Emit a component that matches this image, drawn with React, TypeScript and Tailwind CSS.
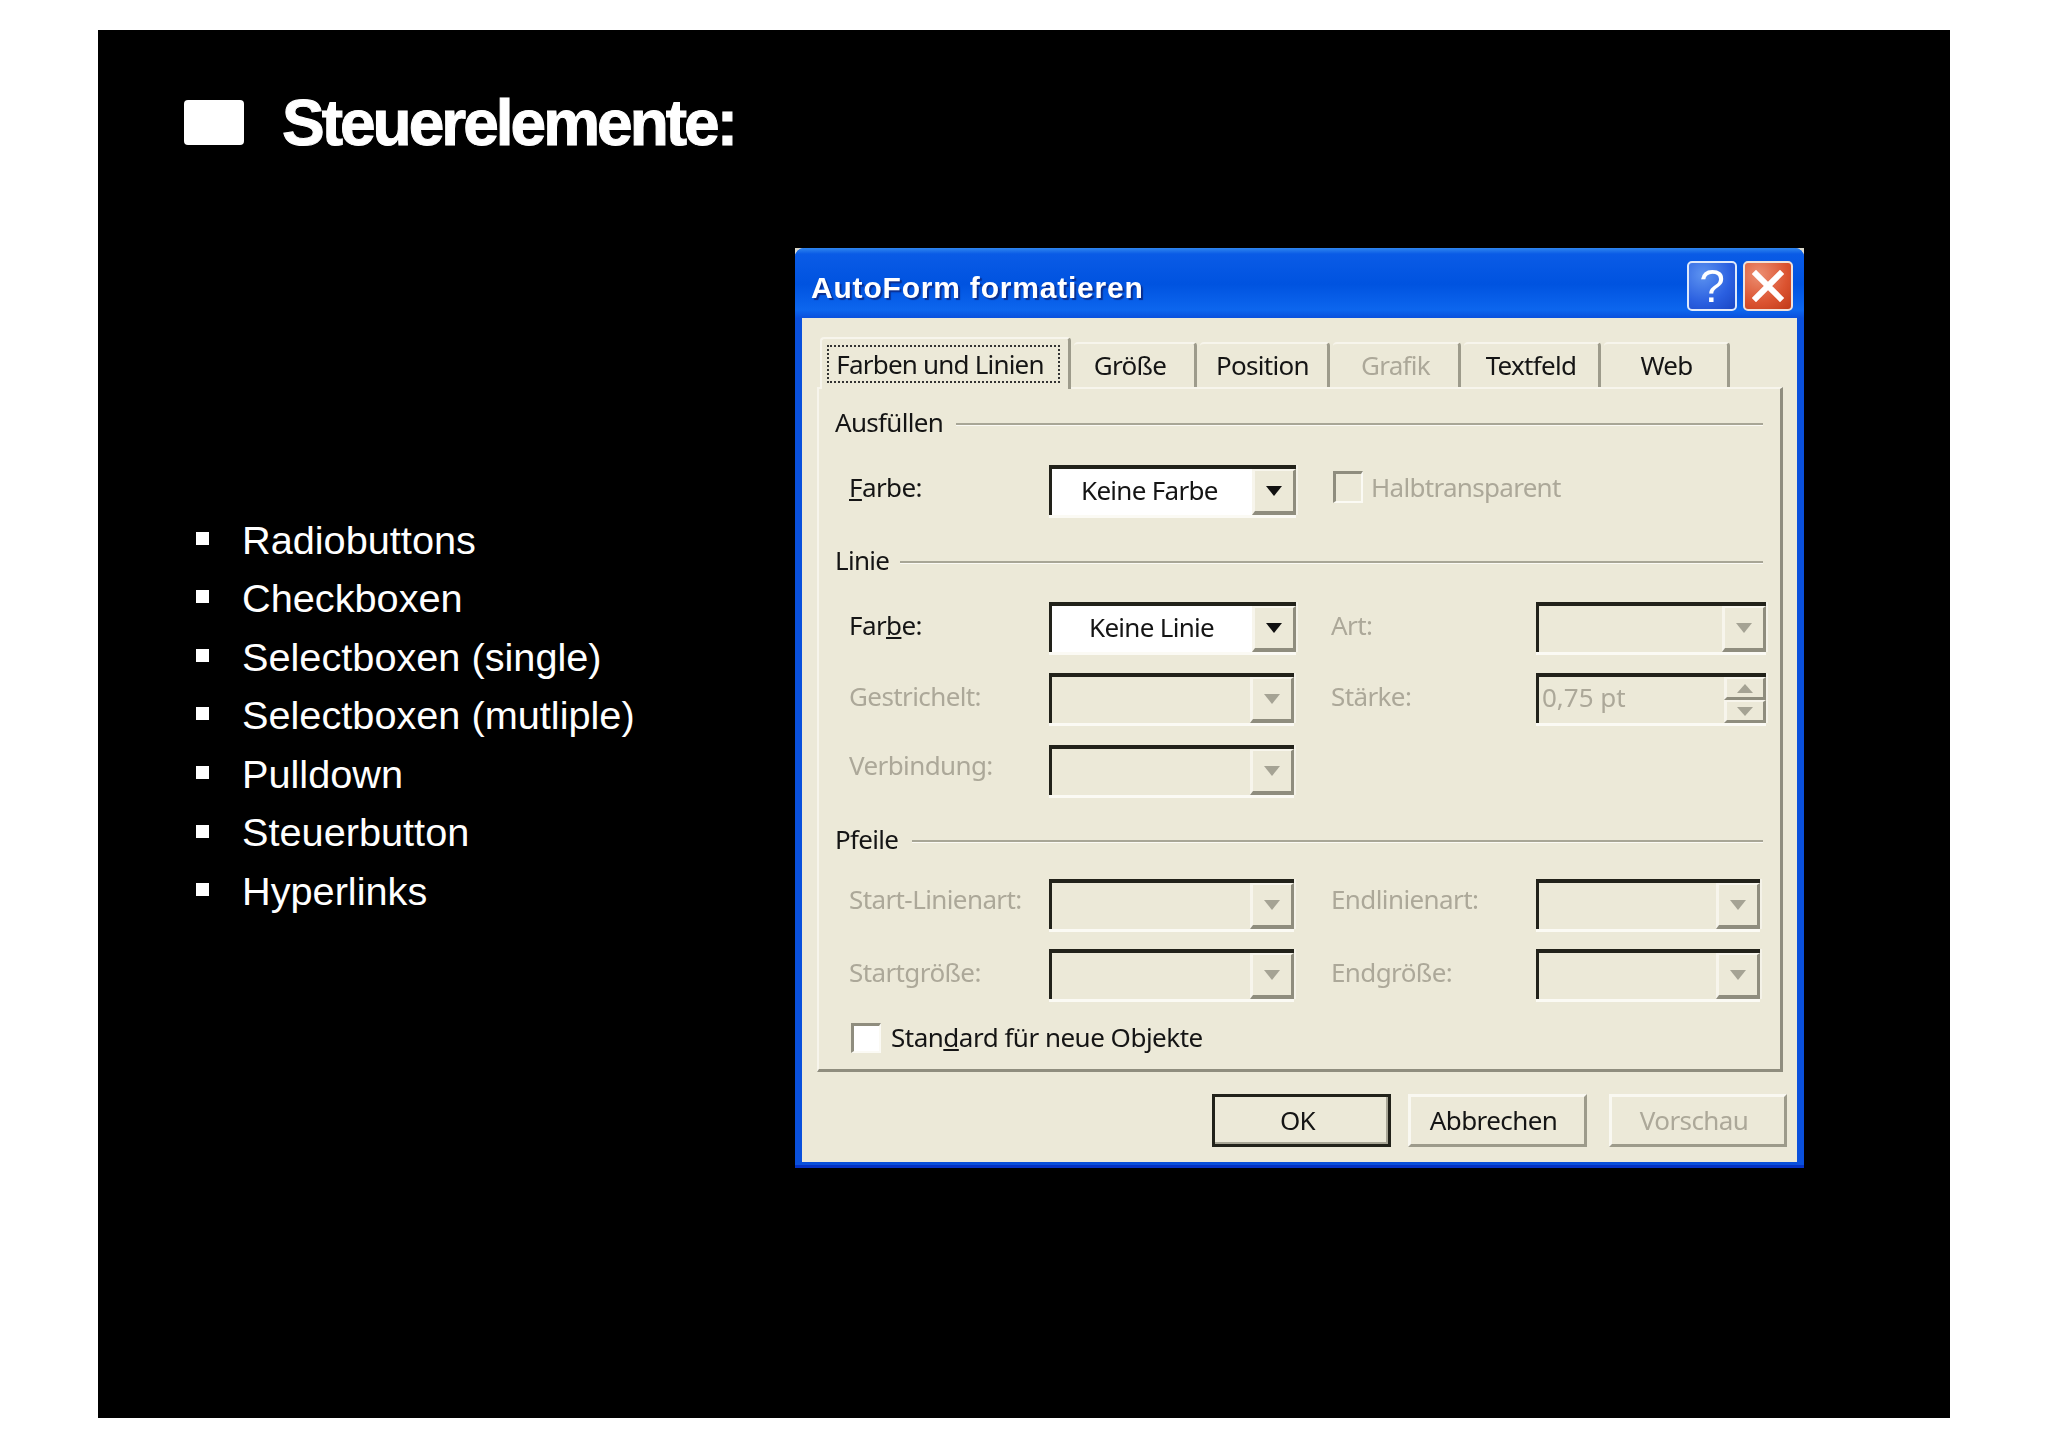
import React from "react";

const dlgFont = "[font-family:'Noto_Sans','Open_Sans',sans-serif]";

function Arrow({ disabled }: { disabled?: boolean }) {
  return (
    <svg width="18" height="11" viewBox="0 0 18 11" className="block">
      <polygon points="1,0 17,0 9,10" fill={disabled ? "#a5a394" : "#111111"} />
    </svg>
  );
}

function Combo({ w, text, disabled, pl = 0 }: { w: string; text?: string; disabled?: boolean; pl?: number }) {
  return (
    <div
      className={`${w} h-[50px] flex shrink-0 border-t-[4px] border-l-[3px] border-[#22221a] shadow-[0_3px_0_#fbfaf4,2px_0_0_#f4f2e8] ${disabled ? "bg-[#ece9d8]" : "bg-white"}`}
    >
      <div className="flex-1 flex items-center text-[26px] text-[#151515] tracking-[-0.7px] -translate-y-[2px]" style={{ paddingLeft: pl }}>
        {text}
      </div>
      <div className="w-[44px] flex items-center justify-center bg-[#ece9d8] border-t-[2px] border-l-[3px] border-r-[3px] border-b-[4px] border-t-[#f7f5ec] border-l-[#f7f5ec] border-r-[#8f8d7e] border-b-[#8f8d7e]">
        <Arrow disabled={disabled} />
      </div>
    </div>
  );
}

function Spinner() {
  return (
    <div className="w-[230px] h-[50px] flex shrink-0 border-t-[4px] border-l-[3px] border-[#22221a] shadow-[0_3px_0_#fbfaf4,2px_0_0_#f4f2e8] bg-[#ece9d8]">
      <div className="flex-1 flex items-center pl-[3px] text-[26px] text-[#aca899] tracking-[0px] -translate-y-[3px]">0,75 pt</div>
      <div className="w-[42px] flex flex-col">
        <div className="flex-1 flex items-center justify-center bg-[#ece9d8] border-t-[2px] border-l-[3px] border-r-[3px] border-b-[3px] border-t-[#f7f5ec] border-l-[#f7f5ec] border-r-[#8f8d7e] border-b-[#8f8d7e]">
          <svg width="18" height="9" viewBox="0 0 18 9" className="block">
            <polygon points="9,0 17,9 1,9" fill="#a5a394" />
          </svg>
        </div>
        <div className="flex-1 flex items-center justify-center bg-[#ece9d8] border-t-[2px] border-l-[3px] border-r-[3px] border-b-[3px] border-t-[#f7f5ec] border-l-[#f7f5ec] border-r-[#8f8d7e] border-b-[#8f8d7e]">
          <svg width="18" height="9" viewBox="0 0 18 9" className="block">
            <polygon points="1,0 17,0 9,9" fill="#a5a394" />
          </svg>
        </div>
      </div>
    </div>
  );
}

function Heading({ label, mt, line }: { label: string; mt: string; line: string }) {
  return (
    <div className={`flex items-center h-[30px] ${mt} pr-[17px]`}>
      <span className={`${line} shrink-0 text-[26px] text-[#151515] tracking-[-0.7px]`}>{label}</span>
      <div className="flex-1 h-[3px] translate-y-[2px] border-t-[2px] border-b-[1px] border-t-[#a8a696] border-b-[#fbfaf4]" />
    </div>
  );
}

function Label({ children, disabled, w, up = "-translate-y-[2px]" }: { children: React.ReactNode; disabled?: boolean; w: string; up?: string }) {
  return (
    <span className={`${w} ${up} shrink-0 text-[26px] tracking-[-0.6px] ${disabled ? "text-[#aca899]" : "text-[#151515]"}`}>
      {children}
    </span>
  );
}

function Tab({ w, label, disabled, shift = "" }: { w: string; label: string; disabled?: boolean; shift?: string }) {
  return (
    <div
      className={`${w} ${shift} h-[45px] flex items-center justify-center rounded-t-[4px] border-t-[2px] border-t-[#f7f5ec] border-r-[3px] border-r-[#9d9b8b] text-[26px] tracking-[-0.7px] ${disabled ? "text-[#aca899]" : "text-[#151515]"}`}
    >
      {label}
    </div>
  );
}

function Btn({ label, w, variant, mr }: { label: string; w: string; variant?: "default" | "disabled"; mr?: string }) {
  const cls =
    variant === "default"
      ? "border-[3px] border-[#22221a] shadow-[inset_-2px_-2px_0_#a8a696]"
      : "border-t-[3px] border-l-[3px] border-r-[3px] border-b-[3px] border-t-[#f9f8f1] border-l-[#f9f8f1] border-r-[#9d9b8b] border-b-[#9d9b8b]";
  return (
    <div
      className={`${w} ${mr ?? ""} h-[53px] pr-[8px] flex items-center justify-center text-[26px] tracking-[-0.6px] ${cls} ${variant === "disabled" ? "text-[#aca899]" : "text-[#151515]"}`}
    >
      {label}
    </div>
  );
}

const items = [
  "Radiobuttons",
  "Checkboxen",
  "Selectboxen (single)",
  "Selectboxen (mutliple)",
  "Pulldown",
  "Steuerbutton",
  "Hyperlinks",
];

export default function App() {
  return (
    <div className="w-[2048px] h-[1447px] bg-white pt-[30px] pl-[98px]">
      <div className="w-[1852px] h-[1388px] bg-black pl-[86px] pt-[70px]">
        {/* slide title */}
        <div className="flex items-center h-[45px] gap-[38px]">
          <div className="w-[60px] h-[45px] bg-white rounded-[4px]" />
          <h1 className="text-white font-bold text-[64px] leading-none tracking-[-3px] [-webkit-text-stroke:1px_white] [font-family:'Liberation_Sans',Arial,sans-serif]">
            Steuerelemente:
          </h1>
        </div>

        <div className="flex mt-[103px]">
          {/* bullet list */}
          <ul className="w-[611px] shrink-0 pt-[263px] pl-[12px] [font-family:'Liberation_Sans',Arial,sans-serif]">
            {items.map((t) => (
              <li key={t} className="h-[58.55px] flex items-center gap-[33px] text-white text-[39.7px]">
                <span className="w-[13px] h-[13px] bg-white shrink-0 -translate-y-[2px]" />
                <span>{t}</span>
              </li>
            ))}
          </ul>

          {/* dialog */}
          <div className={`w-[1009px] h-[920px] bg-[#d9d8cc] shrink-0 blur-[0.6px] ${dlgFont}`}>
            <div className="w-full h-full rounded-t-[9px] flex flex-col bg-[#0a50dc] border-b-[3px] border-b-[#0331c4] bg-[linear-gradient(180deg,#2f86ee_0px,#0a5be6_6px,#0053e0_36px,#0d66ee_62px,#0a50dc_70px)]">
              {/* title bar */}
              <div className="h-[70px] shrink-0 flex items-center pl-[16px] pr-[11px] pt-[5px]">
                <span className="flex-1 text-white font-bold text-[30px] tracking-[0.8px] translate-y-[2px] [font-family:'Liberation_Sans',Arial,sans-serif] [text-shadow:2px_2px_1px_#0a2f90]">
                  AutoForm formatieren
                </span>
                <div className="w-[50px] h-[50px] rounded-[5px] border-[2px] border-[#dfe9fb] bg-[radial-gradient(circle_at_30%_25%,#5d93f0,#2a5fe0_60%,#1a46c4)] flex items-center justify-center text-white text-[46px] leading-none [font-family:'Liberation_Sans',Arial,sans-serif]">
                  ?
                </div>
                <div className="w-[50px] h-[50px] ml-[6px] rounded-[5px] border-[2px] border-[#f1e2da] bg-[radial-gradient(circle_at_30%_25%,#ec8f72,#db5330_60%,#c03a18)] flex items-center justify-center">
                  <svg width="32" height="32" viewBox="0 0 32 32" className="block">
                    <path d="M4 4 L28 28 M28 4 L4 28" stroke="#ffffff" strokeWidth="6" strokeLinecap="square" />
                  </svg>
                </div>
              </div>

              {/* client */}
              <div className="flex-1 mx-[7px] mb-[3px] bg-[#ece9d8] flex flex-col pt-[19px] px-[15px] pr-[14px]">
                <div className="flex items-end h-[50px] pl-[3px] gap-[3px] shrink-0">
                  <div className="w-[251px] h-[52px] -mb-[2px] pr-[4px] flex items-center justify-center rounded-t-[4px] bg-[#ece9d8] relative z-10 border-t-[2px] border-t-[#f7f5ec] border-l-[2px] border-l-[#f7f5ec] border-r-[3px] border-r-[#9d9b8b]">
                    <span className="w-[233px] h-[38px] pr-[6px] flex items-center justify-center border-[2px] border-dotted border-[#333] text-[26px] text-[#151515] tracking-[-0.8px] whitespace-nowrap">
                      Farben und Linien
                    </span>
                  </div>
                  <Tab w="w-[123px]" label="Größe" shift="pr-[8px]" />
                  <Tab w="w-[130px]" label="Position" shift="pr-[2px]" />
                  <Tab w="w-[128px]" label="Grafik" disabled />
                  <Tab w="w-[137px]" label="Textfeld" />
                  <Tab w="w-[126px]" label="Web" shift="pl-[2px]" />
                </div>

                {/* panel */}
                <div className="h-[685px] shrink-0 border-t-[2px] border-l-[2px] border-r-[3px] border-b-[3px] border-t-[#f7f5ec] border-l-[#f7f5ec] border-r-[#8f8d7e] border-b-[#8f8d7e] pt-[18px] pl-[16px]">
                  <Heading label="Ausfüllen" mt="" line="w-[121px]" />

                  <div className="flex items-center mt-[28px] pl-[14px]">
                    <Label w="w-[200px]" up="-translate-y-[3px]">
                      <u>F</u>arbe:
                    </Label>
                    <Combo w="w-[247px]" text="Keine Farbe" pl={29} />
                    <div className="ml-[37px] w-[30px] h-[32px] border-t-[3px] border-l-[3px] border-t-[#8f8d7e] border-l-[#8f8d7e] border-b-[2px] border-r-[2px] border-b-[#fbfaf4] border-r-[#fbfaf4] -translate-y-[3px]" />
                    <span className="ml-[8px] text-[26px] text-[#aca899] tracking-[-0.7px] -translate-y-[3px]">Halbtransparent</span>
                  </div>

                  <Heading label="Linie" mt="mt-[30px]" line="w-[65px]" />

                  <div className="flex items-center mt-[27px] pl-[14px]">
                    <Label w="w-[200px]">
                      Far<u>b</u>e:
                    </Label>
                    <Combo w="w-[247px]" text="Keine Linie" pl={37} />
                    <Label w="w-[205px] ml-[35px]" disabled>
                      Art:
                    </Label>
                    <Combo w="w-[230px]" disabled />
                  </div>

                  <div className="flex items-center mt-[21px] pl-[14px]">
                    <Label w="w-[200px]" disabled>
                      Gestrichelt:
                    </Label>
                    <Combo w="w-[245px] mr-[2px]" disabled />
                    <Label w="w-[205px] ml-[35px]" disabled>
                      Stärke:
                    </Label>
                    <Spinner />
                  </div>

                  <div className="flex items-center mt-[22px] pl-[14px]">
                    <Label w="w-[200px]" disabled up="-translate-y-[5px]">
                      Verbindung:
                    </Label>
                    <Combo w="w-[245px]" disabled />
                  </div>

                  <div className="translate-y-[1px]">
                    <Heading label="Pfeile" mt="mt-[28px]" line="w-[77px]" />
                  </div>

                  <div className="flex items-center mt-[26px] pl-[14px]">
                    <Label w="w-[200px]" disabled up="-translate-y-[5px]">
                      Start-Linienart:
                    </Label>
                    <Combo w="w-[245px] mr-[2px]" disabled />
                    <Label w="w-[205px] ml-[35px]" disabled up="-translate-y-[5px]">
                      Endlinienart:
                    </Label>
                    <Combo w="w-[224px]" disabled />
                  </div>

                  <div className="flex items-center mt-[20px] pl-[14px]">
                    <Label w="w-[200px]" disabled>
                      Startgröße:
                    </Label>
                    <Combo w="w-[245px] mr-[2px]" disabled />
                    <Label w="w-[205px] ml-[35px]" disabled>
                      Endgröße:
                    </Label>
                    <Combo w="w-[224px]" disabled />
                  </div>

                  <div className="flex items-center mt-[19px] pl-[16px]">
                    <div className="w-[30px] h-[30px] bg-white border-t-[3px] border-l-[3px] border-t-[#8f8d7e] border-l-[#8f8d7e] border-b-[2px] border-r-[2px] border-b-[#fbfaf4] border-r-[#fbfaf4]" />
                    <span className="ml-[10px] text-[26px] text-[#151515] tracking-[-0.5px]">
                      Stan<u>d</u>ard für neue Objekte
                    </span>
                  </div>
                </div>

                {/* footer */}
                <div className="flex justify-end pt-[22px] -mr-[4px]">
                  <Btn label="OK" w="w-[179px]" variant="default" mr="mr-[17px]" />
                  <Btn label="Abbrechen" w="w-[179px]" mr="mr-[22px]" />
                  <Btn label="Vorschau" w="w-[178px]" variant="disabled" />
                </div>
              </div>
            </div>
          </div>
        </div>
      </div>
    </div>
  );
}
